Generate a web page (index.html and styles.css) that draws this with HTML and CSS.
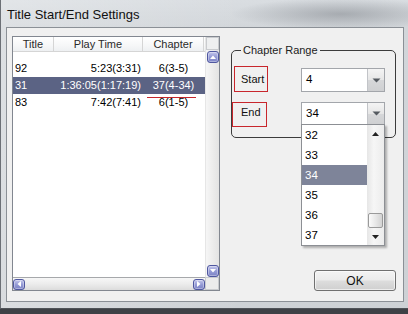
FILE: index.html
```html
<!DOCTYPE html>
<html>
<head>
<meta charset="utf-8">
<link rel="stylesheet" href="styles.css">
</head>
<body>
<div class="window">
  <div class="titlebar">Title Start/End Settings</div>
  <div class="client">
    <div class="listbox">
      <div class="listview">
        <div class="lv-header">
          <div class="th">Title</div>
          <div class="th">Play Time</div>
          <div class="th">Chapter</div>
        </div>
        <div class="lv-rows">
          <div class="tr"><div class="td c-title">92</div><div class="td c-time">5:23(3:31)</div><div class="td c-chap">6(3-5)</div></div>
          <div class="tr selected"><div class="td c-title">31</div><div class="td c-time">1:36:05(1:17:19)</div><div class="td c-chap marked">37(4-34)</div></div>
          <div class="tr"><div class="td c-title">83</div><div class="td c-time">7:42(7:41)</div><div class="td c-chap">6(1-5)</div></div>
        </div>
      </div>
      <div class="vscroll">
        <div class="vs-cap"></div>
        <div class="sbtn"><svg width="8" height="6" viewBox="0 0 8 6"><path d="M1 5 L4 1.5 L7 5 Z" fill="#fff"/></svg></div>
        <div class="vs-track"></div>
        <div class="sbtn"><svg width="8" height="6" viewBox="0 0 8 6"><path d="M1 1 L4 4.5 L7 1 Z" fill="#fff"/></svg></div>
      </div>
      <div class="hscroll">
        <div class="sbtn"><svg width="6" height="8" viewBox="0 0 6 8"><path d="M5 1 L1.5 4 L5 7 Z" fill="#fff"/></svg></div>
        <div class="hs-track"></div>
        <div class="sbtn"><svg width="6" height="8" viewBox="0 0 6 8"><path d="M1 1 L4.5 4 L1 7 Z" fill="#fff"/></svg></div>
      </div>
      <div class="corner"></div>
    </div>
    <div class="side">
      <div class="group">
        <span class="legend">Chapter Range</span>
        <div class="frow start-row">
          <div class="tag tag-start">Start</div>
          <div class="combo combo-start">
            <span class="cval">4</span>
            <span class="cbtn"><svg width="9" height="5" viewBox="0 0 9 5"><path d="M0.5 0.5 L8.5 0.5 L4.5 4.5 Z" fill="#555a60"/></svg></span>
          </div>
        </div>
        <div class="frow end-row">
          <div class="tag tag-end">End</div>
          <div class="combo combo-end">
            <span class="cval">34</span>
            <span class="cbtn"><svg width="9" height="5" viewBox="0 0 9 5"><path d="M0.5 0.5 L8.5 0.5 L4.5 4.5 Z" fill="#555a60"/></svg></span>
            <div class="dropdown">
              <div class="items">
                <div class="item">32</div>
                <div class="item">33</div>
                <div class="item sel">34</div>
                <div class="item">35</div>
                <div class="item">36</div>
                <div class="item">37</div>
              </div>
              <div class="dscroll">
                <span class="darrow"><svg width="7" height="4" viewBox="0 0 7 4"><path d="M0 4 L3.5 0 L7 4 Z" fill="#222"/></svg></span>
                <span class="dtrack"></span>
                <span class="dthumb"></span>
                <span class="darrow bottom"><svg width="7" height="4" viewBox="0 0 7 4"><path d="M0 0 L3.5 4 L7 0 Z" fill="#222"/></svg></span>
              </div>
            </div>
          </div>
        </div>
      </div>
      <button class="ok">OK</button>
    </div>
  </div>
</div>
</body>
</html>
```

FILE: styles.css
```css
* { box-sizing: border-box; }
html, body { margin: 0; padding: 0; }
body {
  width: 408px;
  height: 314px;
  overflow: hidden;
  background: #3e4146;
  font-family: "Liberation Sans", Arial, sans-serif;
  font-size: 11px;
  color: #000;
}
.window {
  width: 408px;
  height: 309px;
  padding: 0 4px 6px 5px;
  border-left: 1px solid #6c7076;
  border-bottom: 1px solid #4f5358;
  background:
    radial-gradient(ellipse 110px 16px at 340px 14px, rgba(110,115,122,0.45), rgba(110,115,122,0) 100%),
    linear-gradient(90deg, rgba(255,255,255,0.25), rgba(255,255,255,0) 60%),
    linear-gradient(180deg, #d9dde1 0, #d2d6da 27px, #cdd1d5 100%);
  display: flex;
  flex-direction: column;
}
.titlebar {
  height: 27px;
  padding: 3px 0 0 1px;
  line-height: 24px;
  font-size: 13px;
  color: #111;
  white-space: nowrap;
}
.client {
  height: 276px;
  border: 1px solid #8b9096;
  background: #f0f0f0;
  display: flex;
  align-items: stretch;
}
.listbox {
  margin: 8px 0 0 5px;
  width: 208px;
  height: 255px;
  border: 1px solid #828790;
  background: #fff;
  display: grid;
  grid-template-columns: 192px 14px;
  grid-template-rows: 240px 13px;
}
.listview { overflow: hidden; }
.lv-header {
  display: grid;
  grid-template-columns: 41px 89px 61px;
  height: 15px;
  border-bottom: 1px solid #d5d5d5;
  background: linear-gradient(180deg, #ffffff 0, #f6f7f8 60%, #eef0f2 100%);
}
.th {
  border-right: 1px solid #d5d5d5;
  text-align: center;
  line-height: 14px;
  color: #2a2a2a;
}
.lv-rows { padding-top: 8px; }
.tr {
  display: grid;
  grid-template-columns: 41px 89px 61px;
  height: 17px;
  line-height: 17px;
}
.tr.selected { background: #5b6384; color: #fff; }
.td { white-space: nowrap; }
.c-title { padding-left: 2px; }
.c-time { text-align: right; padding-right: 2px; }
.c-chap { text-align: center; }
.marked { position: relative; }
.marked::after {
  content: "";
  position: absolute;
  left: 4px;
  right: 8px;
  bottom: -4px;
  height: 1px;
  background: #c4262b;
}
.vscroll {
  display: flex;
  flex-direction: column;
  align-items: center;
  background: linear-gradient(90deg, #f6f6f6, #e3e3e3);
  border-left: 1px solid #e6e6e6;
}
.vs-cap {
  width: 13px;
  height: 13px;
  border: 1px solid #c9cbce;
  background: #eeeff0;
}
.vs-track { flex: 1; }
.sbtn {
  width: 12px;
  height: 12px;
  flex: none;
  border: 1px solid #4f57a0;
  border-radius: 3px;
  background: linear-gradient(180deg, #c3c6ec 0, #959bd6 50%, #7d84c6 100%);
  box-shadow: inset 0 0 0 1px rgba(255,255,255,0.35);
  display: flex;
  align-items: center;
  justify-content: center;
}
.vscroll .sbtn:nth-child(2) { margin-top: 1px; }
.hscroll {
  display: flex;
  align-items: center;
  border-top: 1px solid #a6a8ab;
  background: linear-gradient(180deg, #f7f7f7 0, #ececec 50%, #dcdcdc 100%);
}
.hscroll .sbtn { height: 11px; width: 12px; }
.hs-track { flex: 1; }
.corner {
  border: 1px solid #c9cbce;
  background: #ececec;
}
.side {
  margin: 0 7px 10px 11px;
  flex: 1;
  display: flex;
  flex-direction: column;
}
.group {
  position: relative;
  margin-top: 22px;
  height: 88px;
  border: 1px solid #3c3c3c;
  border-radius: 5px;
  padding: 15px 10px 0 0;
}
.legend {
  position: absolute;
  top: -7px;
  left: 9px;
  padding: 0 2px;
  line-height: 13px;
  background: #f0f0f0;
  color: #222;
}
.frow {
  display: flex;
  align-items: flex-start;
  justify-content: space-between;
}
.end-row { margin-top: 10px; }
.tag {
  border: 1px solid #c8262c;
  color: #111;
}
.tag-start {
  margin-left: 2px;
  width: 34px;
  height: 26px;
  line-height: 24px;
  padding-left: 6px;
}
.tag-end {
  width: 35px;
  height: 25px;
  padding: 2px 0 0 8px;
  line-height: 14px;
}
.combo {
  position: relative;
  width: 84px;
  height: 23px;
  border: 1px solid #a3a6ab;
  background: #fff;
  display: flex;
  align-items: stretch;
}
.combo-start { margin-top: 2px; height: 24px; }
.cval {
  flex: 1;
  padding-left: 4px;
  line-height: 21px;
  font-size: 11.5px;
}
.cbtn {
  width: 17px;
  border-left: 1px solid #c2c4c8;
  background: linear-gradient(180deg, #f4f4f4 0, #e6e6e6 50%, #d6d7d9 51%, #cfd0d2 100%);
  display: flex;
  align-items: center;
  justify-content: center;
}
.dropdown {
  position: absolute;
  top: 21px;
  left: -1px;
  width: 84px;
  height: 122px;
  border: 1px solid #8c8f94;
  background: #fff;
  display: flex;
  box-shadow: 2px 2px 2px rgba(0,0,0,0.28);
  z-index: 5;
}
.items { flex: 1; }
.item {
  height: 20px;
  line-height: 20px;
  padding-left: 3px;
  font-size: 11.5px;
}
.item.sel { background: #7e8499; color: #fff; }
.dscroll {
  position: relative;
  width: 17px;
  background: linear-gradient(90deg, #e6e6e6, #f6f6f6 40%, #ececec);
  display: flex;
  flex-direction: column;
  align-items: center;
}
.darrow {
  height: 17px;
  display: flex;
  align-items: center;
  justify-content: center;
}
.dtrack { flex: 1; }
.dthumb {
  position: absolute;
  left: 1px;
  top: 88px;
  width: 15px;
  height: 15px;
  border: 1px solid #9a9a9a;
  border-radius: 2px;
  background: linear-gradient(90deg, #fbfbfb, #e4e4e4 60%, #d2d2d2);
}
.ok {
  margin-top: auto;
  align-self: flex-end;
  width: 82px;
  height: 21px;
  padding: 0;
  border: 1px solid #707070;
  border-radius: 3px;
  background: linear-gradient(180deg, #f3f3f3 0, #ebebeb 48%, #dddddd 52%, #cfcfcf 100%);
  box-shadow: inset 0 0 0 1px rgba(255,255,255,0.6);
  font-family: "Liberation Sans", Arial, sans-serif;
  font-size: 12px;
  color: #111;
}
```
